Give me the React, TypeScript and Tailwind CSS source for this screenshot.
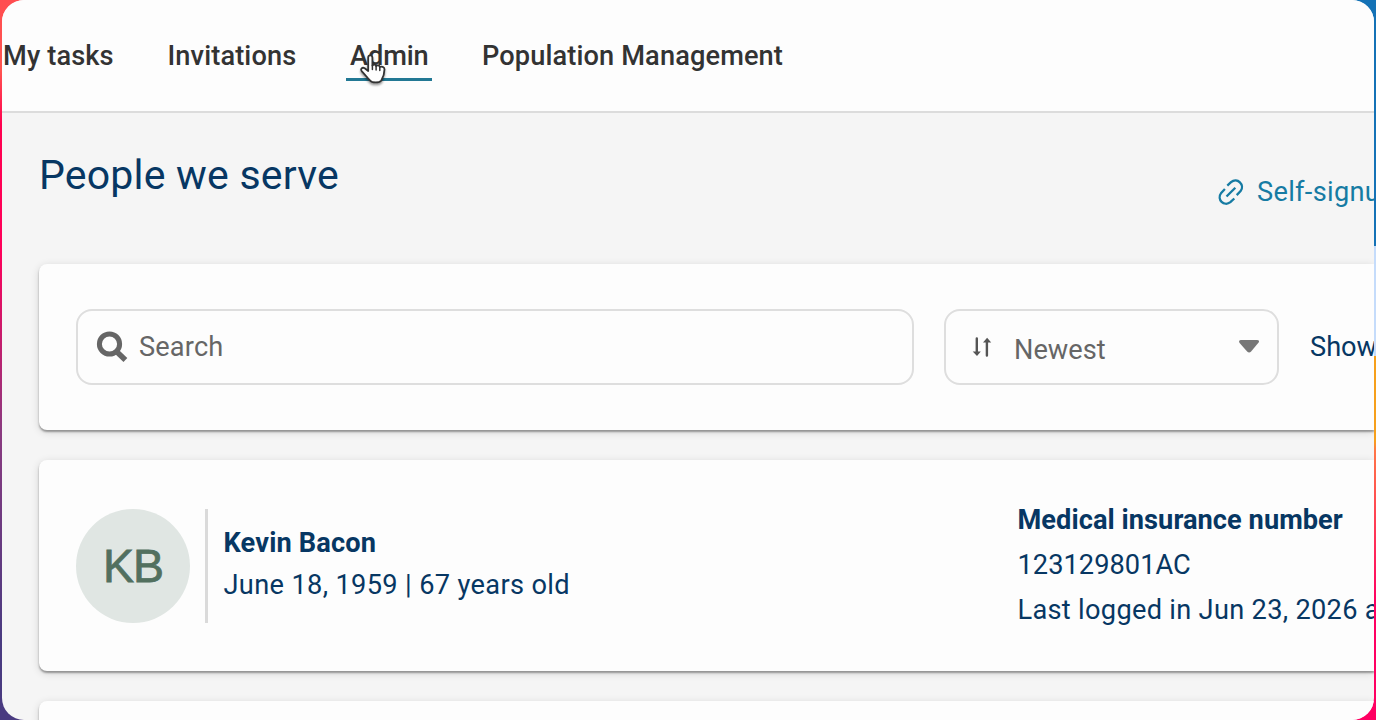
import React from "react";

const field = "flex h-[76px] shrink-0 items-center rounded-[16px] border-2 border-[#dedede] bg-[#fdfdfd]";
const card = "rounded-l-[8px] bg-[#fdfdfd] shadow-[0_2px_2px_rgba(0,0,0,0.34),0_2px_8px_rgba(0,0,0,0.14)]";

function PointerCursor() {
  return (
    <svg className="absolute left-[11px] top-[12px] h-[40px] w-[32px] drop-shadow-[0_2px_1px_rgba(0,0,0,0.4)]" viewBox="0 0 32 40" fill="none">
      <path d="M11.200 21V7.600c0-3 4-3 4.200 0v8c1-1.700 3.400-1.300 3.700.4 1.300-1.200 3.400-.6 3.700 1 1.600-.9 4.600 0 4.700 2.200 0 5.200-1.500 8.300-3.200 11.300-1.800 2.600-9.300 2.600-11.300 0C10.500 28 8.600 25.200 4.900 21.300c-1.900-2.200.4-4.600 2.800-3z" fill="#fff" stroke="#333" strokeWidth="1.800" strokeLinejoin="round" />
      <path d="M15.400 15.500v4M19.100 16v4M22.800 17.200v3.300" stroke="#333" strokeWidth="1.500" strokeLinecap="round" />
    </svg>
  );
}

function LinkIcon() {
  return (
    <svg className="h-[28px] w-[28px] shrink-0" viewBox="0 0 28 28" fill="none" stroke="#167ba3" strokeWidth="2.300">
      <path d="M10.300 7.700l3.700-3.500c6.200-5.200 14.300 2.600 9.600 8.900l-3.900 4" />
      <path d="M7.900 11L4.200 14.900c-4.900 6.500 2.900 14.200 9.200 9.300l3.900-3.700" />
      <path d="M9.500 18.500l8.800-8.800" />
    </svg>
  );
}

function SearchIcon() {
  return (
    <svg className="h-[32px] w-[32px] shrink-0" viewBox="0 0 32 32" fill="none" stroke="#666">
      <circle cx="13.500" cy="13" r="10.100" strokeWidth="5" />
      <path d="M20.500 20.500l8.900 8.500" strokeWidth="5.500" />
    </svg>
  );
}

function SortIcon() {
  return (
    <svg className="h-[20px] w-[20px] shrink-0" viewBox="0 0 20 20" fill="#555">
      <path d="M3.600 1.500a1.200 1.200 0 012.400 0v13h2.800L5 19l-4.300-4.500h2.900z" />
      <path d="M13.700 18.500a1.200 1.200 0 002.400 0V5.500h3.100L15.100.7 11 5.500h2.700z" />
    </svg>
  );
}

export default function App() {
  return (
    <div className="grid h-[720px] w-[1376px] grid-cols-[2px_1372px_2px] overflow-hidden font-[Roboto,sans-serif] text-[27.2px] leading-[36px] tracking-[0.3px]">
      <div className="relative col-span-3 col-start-1 row-start-1 grid grid-cols-2">
        <div className="h-[720px] bg-[linear-gradient(180deg,#ff4d50_0,#ff5550_70px,#ff004f_125px,#ff005a_250px,#8b3a80_430px,#493a80_640px)]" />
        <div className="flex flex-col">
          <div className="h-[246px] bg-[#1472b6]" />
          <div className="h-[110px] bg-[#c5dcfb]" />
          <div className="grow bg-[linear-gradient(180deg,#f6a01c_0,#f6a01c_85px,#ff7548_95px,#ff0062_245px)]" />
        </div>
      </div>
      <div className="relative col-start-2 row-start-1 flex h-[720px] flex-col overflow-hidden rounded-[22px] bg-[#f5f5f5] text-[#073763]">
        <header className="h-[113px] shrink-0 border-b-2 border-[#dcdcdc] bg-[#fdfdfd] pt-[38px]">
          <nav className="flex whitespace-nowrap font-medium tracking-[0.12px] text-[#333]">
            <span className="w-[165.500px] pl-px">My tasks</span>
            <span className="w-[178.500px]">Invitations</span>
            <span className="relative mr-[50px] h-[43px] w-[86px] border-b-[3px] border-[#227894] pl-[4px] tracking-[-0.1px]">
              Admin
              <PointerCursor />
            </span>
            <span>Population Management</span>
          </nav>
        </header>
        <main className="flex grow flex-col pl-[37px]">
          <div className="flex h-[151px] shrink-0 justify-between pt-[36px]">
            <h1 className="text-[41px] leading-[52px] tracking-[0.21px]">People we serve</h1>
            <div className="mt-[25px] flex h-[36px] w-[157px] items-center gap-[12px] whitespace-nowrap text-[#167ba3]">
              <LinkIcon />
              <span>Self-signup</span>
            </div>
          </div>
          <section className={`${card} flex h-[166px] shrink-0 items-center pl-[37px]`}>
            <div className={`${field} w-[838px] gap-[11px] pl-[18px] text-[#666]`}>
              <SearchIcon />
              <span className="tracking-[0.15px]">Search</span>
            </div>
            <div className={`${field} ml-[30px] w-[335px] pl-[26px] text-[#666]`}>
              <SortIcon />
              <span className="ml-[22px] mt-[6px] tracking-normal">Newest</span>
              <svg className="ml-auto mr-[17px] h-[14px] w-[22px] shrink-0" viewBox="0 0 22 14" fill="#777"><path d="M3 0h16q3 .3 1.600 2.500l-7.500 9q-2 2-4 0L1.600 3Q0 .3 3 0z" /></svg>
            </div>
            <span className="ml-[31px] whitespace-nowrap tracking-normal">Show</span>
          </section>
          <section className={`${card} mt-[30px] flex h-[211px] shrink-0 items-center pl-[37px]`}>
            <div className="flex size-[114px] shrink-0 items-center justify-center rounded-full bg-[#e0e6e3] font-['Liberation_Sans',sans-serif] text-[46.5px] tracking-[-1px] text-[#52705f]">
              <span className="[-webkit-text-stroke:0.8px_#52705f]">KB</span>
            </div>
            <div className="ml-[15px] h-[114px] w-[3px] shrink-0 bg-[#dadada]" />
            <div className="mb-[4px] ml-[15.500px] w-[794px] shrink-0 leading-[42px]">
              <div className="font-bold tracking-[0.15px]">Kevin Bacon</div>
              <div className="tracking-[0.35px]">June 18, 1959 | 67 years old</div>
            </div>
            <div className="shrink-0 whitespace-nowrap leading-[45px]">
              <div className="font-bold tracking-[0.05px]">Medical insurance number</div>
              <div className="tracking-[0.05px]">123129801AC</div>
              <div>Last logged in Jun 23, 2026 at</div>
            </div>
          </section>
          <section className={`${card} mt-[30px] h-[60px] shrink-0`} />
        </main>
      </div>
    </div>
  );
}
